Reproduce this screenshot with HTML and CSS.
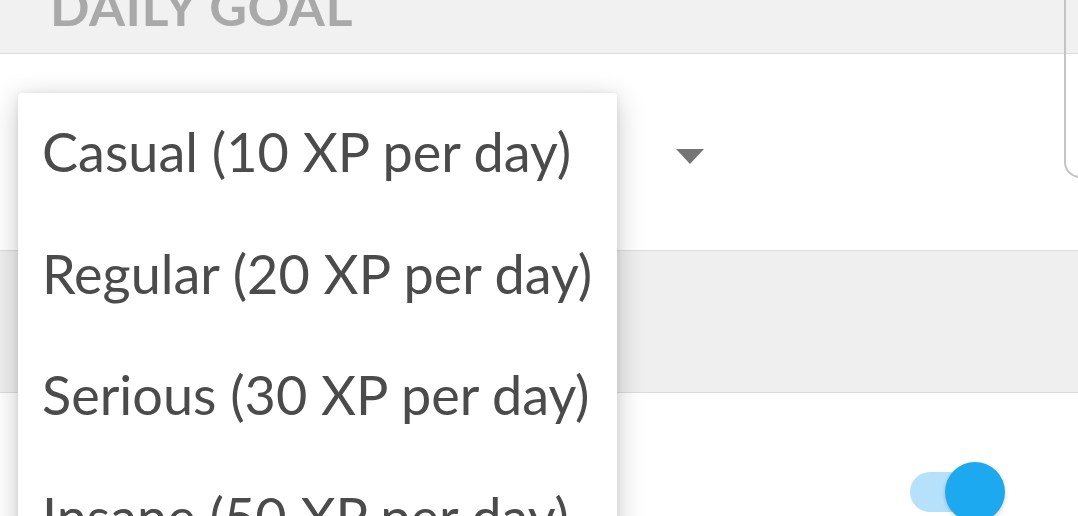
FILE: index.html
```html
<!DOCTYPE html>
<html lang="en">
<head>
    <meta charset="UTF-8">
    <title>Daily goal</title>
<link rel="stylesheet" href="styles.css">
</head>
<body>
    <div class="settings">
        <div class="section-head">
            <h2>DAILY GOAL</h2>
        </div>

        <div class="goal-row">
            <div class="select">
                <span class="select-value">Regular (20 XP per day)</span>
                <span class="caret"></span>
            </div>
        </div>

        <div class="band"></div>

        <div class="toggle-row">
            <div class="toggle">
                <span class="track"></span>
                <span class="thumb"></span>
            </div>
        </div>

        <div class="side-card"></div>

        <ul class="menu">
            <li>Casual (10 XP per day)</li>
            <li>Regular (20 XP per day)</li>
            <li>Serious (30 XP per day)</li>
            <li>Insane (50 XP per day)</li>
        </ul>
    </div>
</body>
</html>
```

FILE: styles.css
```css
*{
    margin: 0;
    padding: 0;
    box-sizing: border-box;
}
body{
    width: 1078px;
    height: 516px;
    overflow: hidden;
    background: #fff;
    font-family: Lato, "Open Sans", sans-serif;
}
.settings{
    position: relative;
    height: 100%;
    display: flex;
    flex-direction: column;
}

.section-head{
    flex-shrink: 0;
    height: 54px;
    background: #f1f1f1;
    border-bottom: 1px solid #dcdcdc;
    display: flex;
    flex-direction: column;
    justify-content: flex-end;
    padding: 0 0 21px 50px;
    overflow: hidden;
}
.section-head h2{
    font-size: 52px;
    line-height: 1;
    font-weight: 700;
    color: #a9a9a9;
    letter-spacing: 0.5px;
}

.goal-row{
    flex-shrink: 0;
    height: 197px;
    border-bottom: 1px solid #dcdcdc;
    display: flex;
    align-items: center;
    padding-left: 44px;
}
.select{
    width: 660px;
    display: flex;
    align-items: center;
    justify-content: space-between;
    font-size: 54px;
    color: #4b4b4b;
}
.caret{
    width: 0;
    height: 0;
    border-left: 14.5px solid transparent;
    border-right: 14.5px solid transparent;
    border-top: 15px solid #757575;
    margin-top: 8px;
}

.band{
    flex-shrink: 0;
    height: 142px;
    background: #efefef;
    border-bottom: 1px solid #dcdcdc;
}

.toggle-row{
    flex: 1 0 auto;
    display: flex;
    justify-content: flex-end;
    padding: 69px 73px 0 0;
}
.toggle{
    position: relative;
    width: 95px;
    height: 60px;
}
.track{
    position: absolute;
    left: 0;
    top: 10px;
    width: 80px;
    height: 40px;
    border-radius: 20px;
    background: #b5e1fa;
}
.thumb{
    position: absolute;
    right: 0;
    top: 0;
    width: 60px;
    height: 60px;
    border-radius: 50%;
    background: #1ca9f0;
    box-shadow: 0 2px 4px rgba(0, 0, 0, 0.18);
}

.side-card{
    position: absolute;
    top: -2px;
    right: -2px;
    width: 16px;
    height: 180px;
    border: 2px solid #c4c4c4;
    border-top: none;
    border-bottom-left-radius: 16px;
}

.menu{
    position: absolute;
    left: 18px;
    top: 93px;
    width: 599px;
    height: 470px;
    list-style: none;
    background: #fff;
    border-radius: 4px;
    box-shadow: 0 6px 28px rgba(0, 0, 0, 0.22), 0 1px 6px rgba(0, 0, 0, 0.08);
}
.menu li{
    height: 121.5px;
    display: flex;
    align-items: center;
    padding: 0 0 4px 24px;
    font-size: 54px;
    color: #4b4b4b;
    white-space: nowrap;
}
```
